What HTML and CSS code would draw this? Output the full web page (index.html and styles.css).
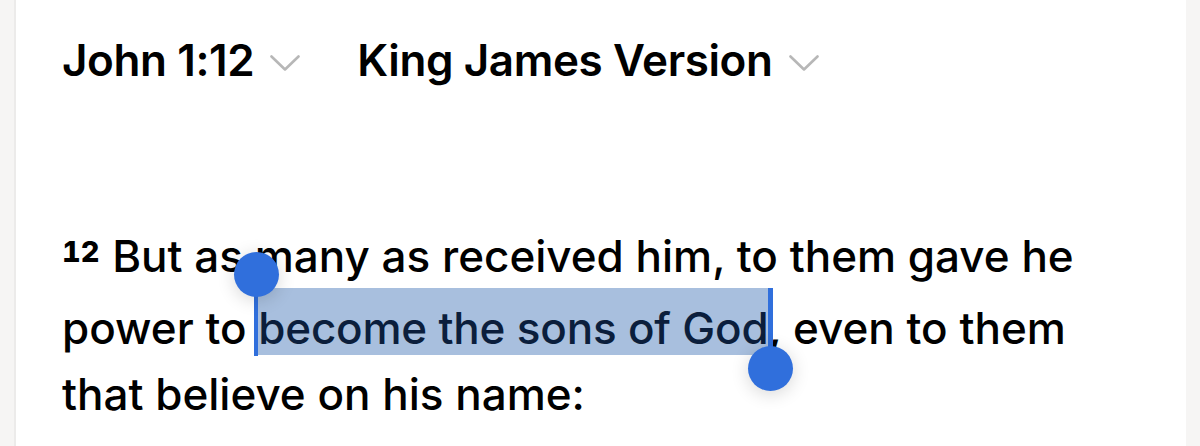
FILE: index.html
```html
<!DOCTYPE html>
<html lang="en">
<head>
<meta charset="utf-8">
<title>John 1:12 — King James Version</title>
<link rel="stylesheet" href="styles.css">
</head>
<body>
  <main class="reader">
    <header class="picker">
      <button class="picker-item">
        <span class="picker-label">John 1:12</span>
        <svg class="chevron" viewBox="0 0 30 16" aria-hidden="true"><path d="M1.5 1.5 L15 14.5 L28.5 1.5"/></svg>
      </button>
      <button class="picker-item">
        <span class="picker-label">King James Version</span>
        <svg class="chevron" viewBox="0 0 30 16" aria-hidden="true"><path d="M1.5 1.5 L15 14.5 L28.5 1.5"/></svg>
      </button>
    </header>

    <p class="verse"><sup class="verse-num">12</sup> But as many as received him, to them gave he power to <span class="selection">become the sons of God<span class="handle handle-start"></span><span class="handle handle-end"></span></span>, even to them that believe on his name:</p>
  </main>
</body>
</html>
```

FILE: styles.css
```css
html, body {
  margin: 0;
  height: 100%;
}

body {
  background: #f6f5f4;
  font-family: "Inter", "Roboto", "Liberation Sans", sans-serif;
  color: #000;
}

.reader {
  box-sizing: border-box;
  height: 100%;
  margin: 0 14px;
  padding: 0 66px 0 46px;
  background: #fff;
  border-left: 2px solid #ecebea;
  overflow: hidden;
}

/* reference + translation pickers */
.picker {
  display: flex;
  align-items: center;
  gap: 57px;
  padding-top: 34px;
  height: 52px;
}

.picker-item {
  display: flex;
  align-items: center;
  gap: 16px;
  padding: 0;
  border: 0;
  background: none;
  font: inherit;
  color: inherit;
}

.picker-label {
  font-size: 44px;
  font-weight: 600;
  letter-spacing: -0.4px;
}

.chevron {
  width: 30px;
  height: 16px;
  margin-top: 6px;
  fill: none;
  stroke: #b7b7b7;
  stroke-width: 2.6;
  stroke-linecap: round;
  stroke-linejoin: round;
}

/* verse body */
.verse {
  margin: 137px 0 0;
  font-size: 44px;
  font-weight: 500;
  line-height: 66px;
}

.verse-num {
  font-size: 29px;
  font-weight: 800;
  font-variant-numeric: tabular-nums;
  vertical-align: 0;
  position: relative;
  top: -10px;
  margin-right: 1px;
}

/* selected phrase: highlight spans the full line slot above the baseline */
.selection {
  position: relative;
  background: #a8bfde;
  color: #0b1e3c;
  padding: 13px 0 0;
  letter-spacing: -0.2px;
}

.handle {
  position: absolute;
  width: 4px;
  background: #306fdc;
}

.handle::after {
  content: "";
  position: absolute;
  left: 50%;
  width: 45px;
  height: 45px;
  margin-left: -22.5px;
  border-radius: 50%;
  background: #306fdc;
  box-shadow: 0 3px 18px rgba(0, 0, 0, 0.16);
}

.handle-start {
  left: -4px;
  top: 0;
  bottom: -1px;
}

.handle-start::after {
  top: -36px;
}

.handle-end {
  right: -5px;
  width: 5px;
  top: 0;
  bottom: -14px;
}

.handle-end::after {
  bottom: -22px;
}
```
